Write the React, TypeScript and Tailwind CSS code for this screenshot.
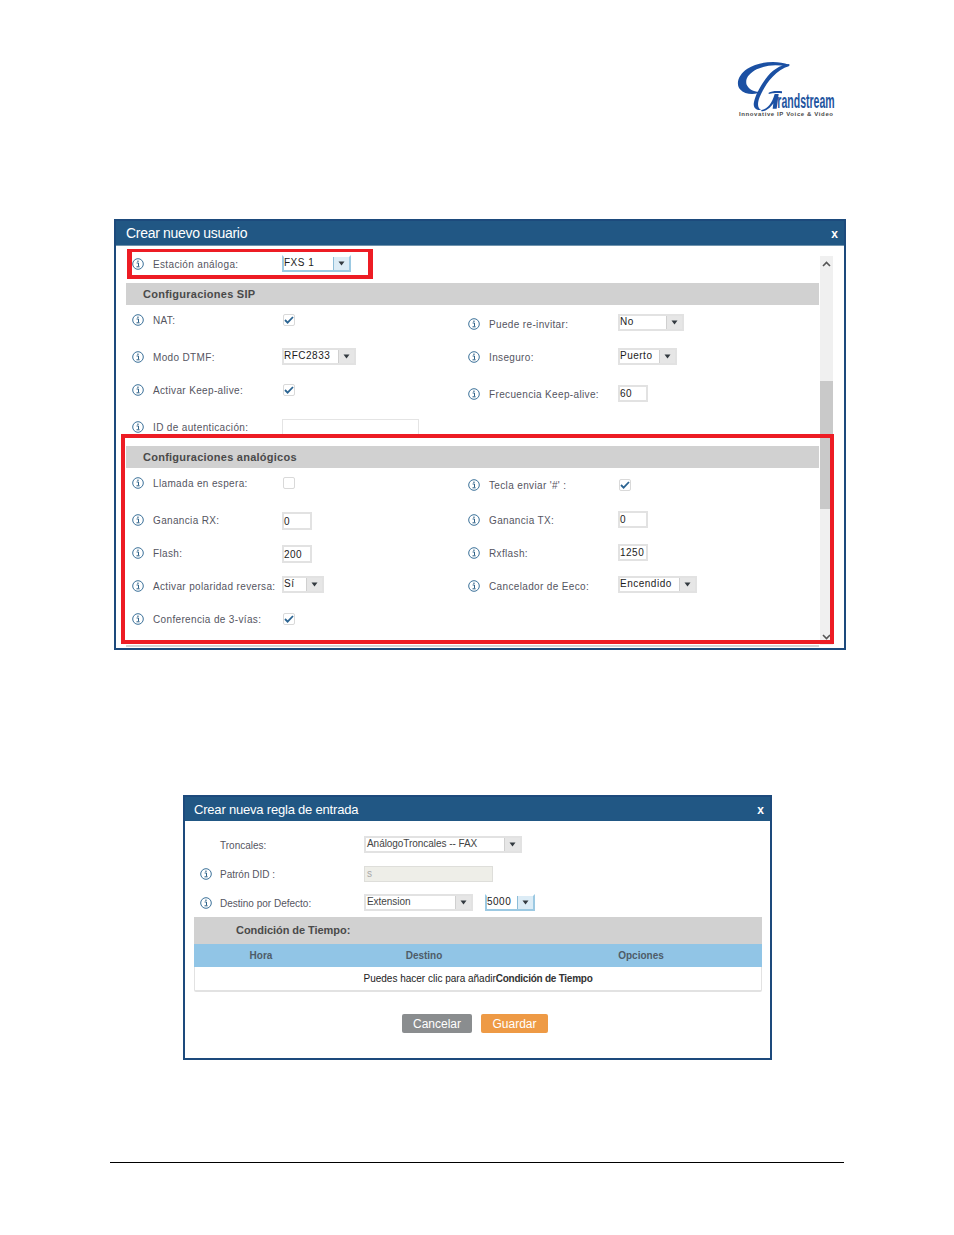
import type { ReactNode } from 'react';

const InfoIcon = () => (
  <svg width="12" height="12" viewBox="0 0 12 12" className="shrink-0">
    <circle cx="6" cy="6" r="5.3" fill="none" stroke="#3b7199" strokeWidth="1" />
    <path d="M4.6 5h1.9v3.4M4.5 8.8h3.1" fill="none" stroke="#2f6288" strokeWidth="1" />
    <rect x="5.3" y="2.6" width="1.3" height="1.3" fill="#2f6288" />
  </svg>
);

const Arrow = () => (
  <svg width="7" height="5" viewBox="0 0 7 5">
    <path d="M0.5 0.5h6L3.5 4.5z" fill="#333a40" />
  </svg>
);

const Checkbox = ({ checked = true, className = '' }: { checked?: boolean; className?: string }) => (
  <div className={`w-[12px] h-[12px] ml-[1px] border border-[#d9d9d9] rounded-[2px] bg-white flex items-center justify-center ${className}`}>
    {checked && (
      <svg width="10" height="8" viewBox="0 0 10 8">
        <path d="M1 4l2.6 2.6L9 1" fill="none" stroke="#2b6492" strokeWidth="1.8" />
      </svg>
    )}
  </div>
);

const Select = ({ value, className = '', focus = false, tight = false }: { value: string; className?: string; focus?: boolean; tight?: boolean }) => (
  <div className={`h-[17px] flex border-2 ${focus ? 'border-[#9cc9e2] border-t-[#ffffff]' : 'border-[#e2e2e2]'} bg-white ${className}`}>
    <div className={`flex-1 text-[10px] ${tight ? 'tracking-[-0.05px] text-[#444] pl-[1px]' : 'tracking-[0.5px] text-[#1c1c1c]'} leading-[12px] whitespace-nowrap`}>{value}</div>
    <div className={`w-[16px] flex items-center justify-center border-l ${focus ? 'bg-[#dcecf6] border-[#8dbdd8]' : 'bg-[#e6e6e6] border-[#d0d0d0]'}`}>
      <Arrow />
    </div>
  </div>
);

const TextInput = ({ value = '', className = '' }: { value?: string; className?: string }) => (
  <div className={`h-[17px] border-2 border-[#e2e2e2] bg-white text-[10px] tracking-[0.5px] leading-[13px] text-[#1c1c1c] ${className}`}>
    {value}
  </div>
);

const Field = ({ label, className = '', children }: { label: string; className?: string; children?: ReactNode }) => (
  <div className={`w-[336px] h-[18px] flex items-center pl-[6px] ${className}`}>
    <InfoIcon />
    <div className="w-[138px] shrink-0 pl-[9px] text-[10px] tracking-[0.35px] whitespace-nowrap text-[#55555f]">{label}</div>
    {children}
  </div>
);

const SectionBar = ({ title }: { title: string }) => (
  <div className="h-[22px] bg-[#d1d1d1] pl-[17px] flex items-center text-[11px] font-bold tracking-[0.25px] text-[#4a4a4a]">{title}</div>
);

const Logo = () => (
  <svg width="130" height="80" viewBox="0 0 390 240">
    {/* upper curl of the G */}
    <path
      d="M206 44C172 30 116 34 82 56C56 74 46 100 60 118C76 136 108 136 128 124C106 128 88 120 80 104C74 86 88 70 110 58C136 46 168 42 200 50z"
      fill="#1b50a3"
    />
    {/* stem */}
    <path
      d="M208 42C180 44 154 62 136 88C120 110 106 136 102 156C98 172 108 182 124 180C114 176 112 164 116 150C124 126 140 98 158 80C172 66 188 54 208 48z"
      fill="#1b50a3"
    />
    {/* bowl and cross bar */}
    <path d="M124 180C142 178 156 160 164 132L176 132L170 176L158 176L160 160C152 172 140 184 124 184z" fill="#1b50a3" />
    <path d="M146 128C156 122 172 122 186 124L186 130C172 128 158 128 146 132z" fill="#1b50a3" />
    <text transform="translate(172 175) scale(0.545 1)" fontFamily="'Liberation Sans', sans-serif" fontSize="58" fontWeight="700" fill="#1f559f">
      randstream
    </text>
    <text x="57" y="197" fontFamily="'Liberation Sans', sans-serif" fontSize="18" fontWeight="700" fill="#4a4a4a" textLength="282" lengthAdjust="spacing">
      Innovative IP Voice &amp; Video
    </text>
  </svg>
);

export default function App() {
  return (
    <div className="w-[954px] h-[1235px] bg-white relative overflow-hidden font-['Liberation_Sans',Arial,sans-serif]">
      {/* Logo */}
      <div className="h-[219px] pl-[720px] pt-[50px]">
        <Logo />
      </div>

      {/* Crear nuevo usuario */}
      <div className="ml-[114px] w-[732px] h-[431px] border-2 border-[#1d4a7c] bg-white overflow-hidden">
        <div className="h-[25px] bg-[#215784] border-b border-[#6f93ad] flex items-center justify-between pl-[10px] pr-[6px] pt-[1px] text-white">
          <span className="text-[14px] tracking-[-0.3px]">Crear nuevo usuario</span>
          <span className="text-[12px] font-bold">x</span>
        </div>
        <div className="flex">
          <div className="w-[693px] ml-[10px]">
            <div className="h-[37px] flex">
              <Field label="Estación análoga:" className="mt-[9px]">
                <Select value="FXS 1" focus className="w-[69px] -mt-[1px]" />
              </Field>
            </div>
            <SectionBar title="Configuraciones SIP" />
            <div className="h-[35px] flex">
              <Field label="NAT:" className="mt-[6px]"><Checkbox /></Field>
              <Field label="Puede re-invitar:" className="mt-[10px]">
                <Select value="No" className="w-[66px] -mt-[3px]" />
              </Field>
            </div>
            <div className="h-[33px] flex">
              <Field label="Modo DTMF:" className="mt-[8px]">
                <Select value="RFC2833" className="w-[74px] -mt-[1px]" />
              </Field>
              <Field label="Inseguro:" className="mt-[8px]">
                <Select value="Puerto" className="w-[59px] -mt-[2px]" />
              </Field>
            </div>
            <div className="h-[34px] flex">
              <Field label="Activar Keep-alive:" className="mt-[8px]"><Checkbox /></Field>
              <Field label="Frecuencia Keep-alive:" className="mt-[12px]">
                <TextInput value="60" className="w-[30px] -mt-[1px]" />
              </Field>
            </div>
            <div className="h-[39px] flex">
              <Field label="ID de autenticación:" className="mt-[11px]">
                <div className="w-[137px] h-[17px] mt-[1px] border border-[#e4e4e4] bg-white" />
              </Field>
            </div>
            <SectionBar title="Configuraciones analógicos" />
            <div className="h-[34px] flex">
              <Field label="Llamada en espera:" className="mt-[6px]"><Checkbox checked={false} /></Field>
              <Field label="Tecla enviar '#' :" className="mt-[8px]"><Checkbox /></Field>
            </div>
            <div className="h-[34px] flex">
              <Field label="Ganancia RX:" className="mt-[9px]">
                <TextInput value="0" className="w-[30px] h-[18px] mt-[1px] leading-[15px]" />
              </Field>
              <Field label="Ganancia TX:" className="mt-[9px]">
                <TextInput value="0" className="w-[30px] -mt-[1px]" />
              </Field>
            </div>
            <div className="h-[33px] flex">
              <Field label="Flash:" className="mt-[8px]">
                <TextInput value="200" className="w-[30px] h-[18px] mt-[1px] leading-[15px]" />
              </Field>
              <Field label="Rxflash:" className="mt-[8px]">
                <TextInput value="1250" className="w-[30px] -mt-[1px]" />
              </Field>
            </div>
            <div className="h-[33px] flex">
              <Field label="Activar polaridad reversa:" className="mt-[8px]">
                <Select value="Sí" className="w-[42px] -mt-[3px]" />
              </Field>
              <Field label="Cancelador de Eeco:" className="mt-[8px]">
                <Select value="Encendido" className="w-[79px] -mt-[3px]" />
              </Field>
            </div>
            <div className="h-[45px] flex flex-col">
              <Field label="Conferencia de 3-vías:" className="mt-[8px]"><Checkbox /></Field>
              <div className="h-[2px] mt-[17px] bg-[#d4d4d4]" />
            </div>
          </div>
          {/* Scrollbar */}
          <div className="w-[13px] h-[389px] mt-[10px] ml-[1px] bg-[#f0f0f0] flex flex-col items-center">
            <svg width="9" height="6" viewBox="0 0 9 6" className="mt-[5px] shrink-0">
              <path d="M1 5l3.5-3.5L8 5" fill="none" stroke="#555" strokeWidth="1.6" />
            </svg>
            <div className="w-full h-[128px] mt-[114px] bg-[#c9c9c9] shrink-0" />
            <svg width="9" height="6" viewBox="0 0 9 6" className="mt-[125px] shrink-0">
              <path d="M1 1l3.5 3.5L8 1" fill="none" stroke="#555" strokeWidth="1.6" />
            </svg>
          </div>
        </div>
      </div>

      {/* Crear nueva regla de entrada */}
      <div className="ml-[183px] mt-[145px] w-[589px] h-[265px] border-2 border-[#1d4a7c] bg-white">
        <div className="h-[24px] bg-[#215784] flex items-center justify-between pl-[9px] pr-[6px] pt-[1px] text-white">
          <span className="text-[13px] tracking-[-0.2px]">Crear nueva regla de entrada</span>
          <span className="text-[12px] font-bold">x</span>
        </div>
        <div className="pl-[15px] pt-[15px] text-[10px] text-[#55555f]">
          <div className="h-[17px] flex items-center">
            <div className="w-[164px] pl-[20px] mt-[2px]">Troncales:</div>
            <Select value="AnálogoTroncales -- FAX" tight className="w-[158px]" />
          </div>
          <div className="h-[16px] mt-[13px] flex items-center">
            <InfoIcon />
            <div className="w-[152px] pl-[8px]">Patrón DID :</div>
            <div className="w-[129px] h-[16px] border border-[#dededa] bg-[#eeeee8] pl-[2px] text-[#a8a8a8] leading-[14px]">s</div>
          </div>
          <div className="h-[17px] mt-[12px] flex items-center">
            <InfoIcon />
            <div className="w-[152px] pl-[8px] mt-[1px]">Destino por Defecto:</div>
            <Select value="Extension" tight className="w-[109px]" />
            <Select value="5000" focus className="w-[50px] ml-[12px] border-t-[#9cc9e2]" />
          </div>
        </div>
        <div className="ml-[9px] mt-[6px] w-[568px]">
          <div className="h-[27px] bg-[#d1d1d1] pl-[42px] flex items-center text-[11px] font-bold tracking-[-0.05px] text-[#4a4a4a]">
            Condición de Tiempo:
          </div>
          <div className="h-[23px] bg-[#91c5e6] grid grid-cols-[134px_192px_242px] items-center text-center text-[10px] font-bold text-[#4e5c68]">
            <span>Hora</span>
            <span>Destino</span>
            <span>Opciones</span>
          </div>
          <div className="h-[25px] bg-white border border-t-0 border-[#e2e2e2] border-b-2 rounded-b-[2px] flex items-center justify-center text-[10px] text-[#222]">
            Puedes hacer clic para añadir<span className="font-bold tracking-[-0.25px] text-[#333]">Condición de Tiempo</span>
          </div>
        </div>
        <div className="mt-[22px] flex justify-center gap-[9px] pr-[5px] text-[12px] text-white">
          <div className="w-[70px] h-[19px] rounded-[2px] bg-[#8a8d8f] flex items-center justify-center">Cancelar</div>
          <div className="w-[67px] h-[19px] rounded-[2px] bg-[#ee9a45] flex items-center justify-center">Guardar</div>
        </div>
      </div>

      {/* Footer rule */}
      <div className="ml-[110px] mt-[102px] w-[734px] h-px bg-black" />

      {/* Red highlights */}
      <div className="absolute left-[127px] top-[249px] w-[246px] h-[30px] border-x-[5px] border-t-[3px] border-b-4 border-[#ed1c24]" />
      <div className="absolute left-[121px] top-[434px] w-[713px] h-[210px] border-4 border-[#ed1c24]" />
    </div>
  );
}
